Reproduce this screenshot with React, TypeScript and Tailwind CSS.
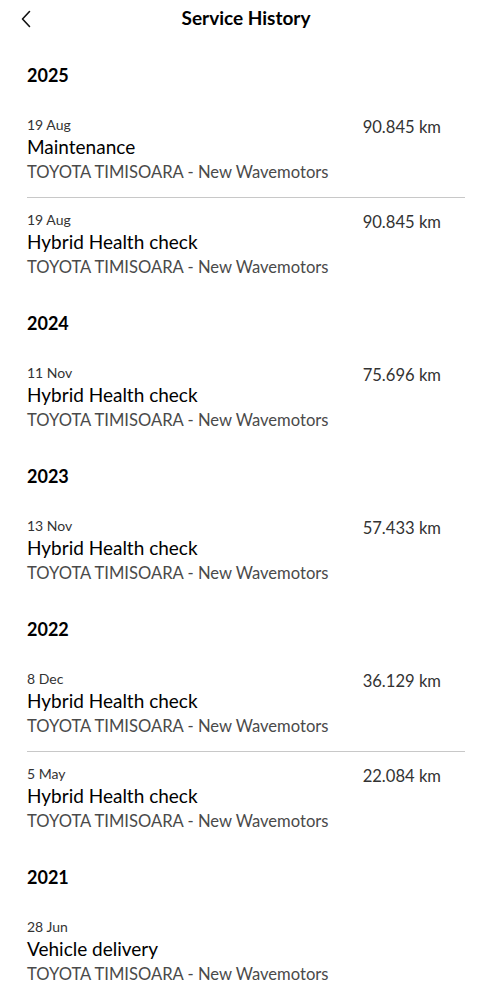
type Service = {
  date: string;
  title: string;
  km?: string;
};

const history: { year: string; items: Service[] }[] = [
  {
    year: "2025",
    items: [
      { date: "19 Aug", title: "Maintenance", km: "90.845 km" },
      { date: "19 Aug", title: "Hybrid Health check", km: "90.845 km" },
    ],
  },
  {
    year: "2024",
    items: [{ date: "11 Nov", title: "Hybrid Health check", km: "75.696 km" }],
  },
  {
    year: "2023",
    items: [{ date: "13 Nov", title: "Hybrid Health check", km: "57.433 km" }],
  },
  {
    year: "2022",
    items: [
      { date: "8 Dec", title: "Hybrid Health check", km: "36.129 km" },
      { date: "5 May", title: "Hybrid Health check", km: "22.084 km" },
    ],
  },
  {
    year: "2021",
    items: [{ date: "28 Jun", title: "Vehicle delivery" }],
  },
];

const DEALER = "TOYOTA TIMISOARA - New Wavemotors";

const ServiceRow = ({ item }: { item: Service }) => (
  <div className="flex flex-row justify-between py-[13px]">
    <div className="flex flex-col">
      <p className="text-[14px] leading-[18px] text-[#333]">{item.date}</p>
      <p className="text-[19px] leading-[26px] text-black">{item.title}</p>
      <p className="text-[16.6px] leading-[24px] text-[#4a4a4a]">{DEALER}</p>
    </div>
    {item.km && (
      <p className="mr-[24px] pt-[2px] text-[16.6px] leading-[18px] text-[#333]">
        {item.km}
      </p>
    )}
  </div>
);

export default function App() {
  return (
    <div
      className="min-h-screen w-full bg-white"
      style={{ fontFamily: "Lato, 'Open Sans', sans-serif" }}
    >
      <div className="relative flex h-[36px] items-center justify-center">
        <button className="absolute left-[18px] top-[8px] p-[2px]">
          <svg width="12" height="18" viewBox="0 0 12 18" fill="none">
            <path
              d="M9.5 1.5L2.5 9l7 7.5"
              stroke="#111"
              strokeWidth="1.6"
              strokeLinecap="round"
              strokeLinejoin="round"
            />
          </svg>
        </button>
        <h1 className="text-[19px] font-bold text-black">Service History</h1>
      </div>

      <div className="px-[27px] pt-[8px]">
        {history.map((group) => (
          <section key={group.year}>
            <h2 className="pt-[19px] pb-[16px] text-[18px] leading-[24px] font-bold text-black">
              {group.year}
            </h2>
            <div className="flex flex-col divide-y divide-[#c8c8c8]">
              {group.items.map((item, i) => (
                <ServiceRow key={i} item={item} />
              ))}
            </div>
          </section>
        ))}
      </div>
    </div>
  );
}
